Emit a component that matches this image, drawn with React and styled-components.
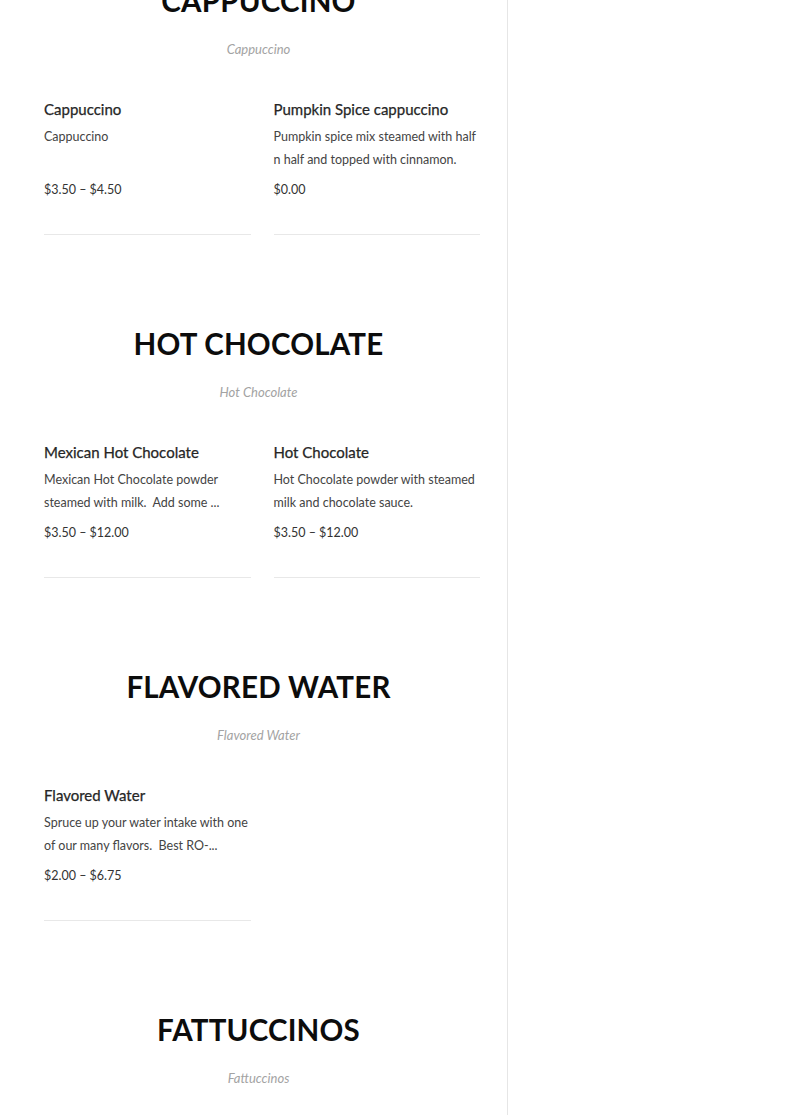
import React from "react";
import styled, { createGlobalStyle } from "styled-components";

const Global = createGlobalStyle`
  html, body { margin: 0; padding: 0; background: #fff; }
  body { font-family: Lato, "Liberation Sans", sans-serif; color: #333; overflow: hidden; }
`;

const Page = styled.div`
  display: flex;
  height: 1115px;
  overflow: hidden;
`;

const Main = styled.main`
  width: 508px;
  box-sizing: border-box;
  border-right: 1px solid #e6e6e6;
  padding: 0 27px 0 44px;
`;

const Scroll = styled.div`
  margin-top: -21px;
`;

const Section = styled.section`
  height: 343px;
  display: flex;
  flex-direction: column;
`;

const Header = styled.header`
  margin-left: -7px;
  text-align: center;
`;

const Heading = styled.h2`
  margin: 0;
  font-family: Lato, "Liberation Sans", sans-serif;
  font-weight: 700;
  font-size: 29.5px;
  line-height: 44px;
  color: #0c0c0c;
  letter-spacing: 0.2px;
`;

const Subtitle = styled.p`
  margin: 16px 0 0;
  font-style: italic;
  font-size: 13px;
  line-height: 20px;
  color: #a3a3a3;
`;

const Grid = styled.div`
  display: grid;
  grid-template-columns: 1fr 1fr;
  column-gap: 23px;
  margin-top: 39px;
`;

const Card = styled.article`
  border-bottom: 1px solid #e8e8e8;
  padding-bottom: 34px;
`;

const Title = styled.h3`
  margin: 0;
  font-size: 15px;
  font-weight: 400;
  line-height: 22px;
  color: #262626;
  -webkit-text-stroke: 0.25px #262626;
`;

const Desc = styled.p`
  margin: 5px 0 0;
  font-size: 12.5px;
  line-height: 23px;
  min-height: 46px;
  color: #444;
`;

const Price = styled.div`
  margin-top: 9px;
  font-size: 12.5px;
  line-height: 20px;
  color: #333;
`;

const sections = [
  {
    name: "CAPPUCCINO",
    sub: "Cappuccino",
    items: [
      { t: "Cappuccino", d: "Cappuccino", p: "$3.50 – $4.50" },
      { t: "Pumpkin Spice cappuccino", d: "Pumpkin spice mix steamed with half n half and topped with cinnamon.", p: "$0.00" },
    ],
  },
  {
    name: "HOT CHOCOLATE",
    sub: "Hot Chocolate",
    items: [
      { t: "Mexican Hot Chocolate", d: "Mexican Hot Chocolate powder steamed with milk.\u00a0 Add some ...", p: "$3.50 – $12.00" },
      { t: "Hot Chocolate", d: "Hot Chocolate powder with steamed milk and chocolate sauce.", p: "$3.50 – $12.00" },
    ],
  },
  {
    name: "FLAVORED WATER",
    sub: "Flavored Water",
    items: [
      { t: "Flavored Water", d: "Spruce up your water intake with one of our many flavors.\u00a0 Best RO-...", p: "$2.00 – $6.75" },
    ],
  },
  { name: "FATTUCCINOS", sub: "Fattuccinos", items: [] },
];

export default function App() {
  return (
    <>
      <Global />
      <Page>
        <Main>
          <Scroll>
            {sections.map((s) => (
              <Section key={s.name}>
                <Header>
                  <Heading>{s.name}</Heading>
                  <Subtitle>{s.sub}</Subtitle>
                </Header>
                {s.items.length > 0 && (
                  <Grid>
                    {s.items.map((it) => (
                      <Card key={it.t}>
                        <Title>{it.t}</Title>
                        <Desc>{it.d}</Desc>
                        <Price>{it.p}</Price>
                      </Card>
                    ))}
                  </Grid>
                )}
              </Section>
            ))}
          </Scroll>
        </Main>
      </Page>
    </>
  );
}
